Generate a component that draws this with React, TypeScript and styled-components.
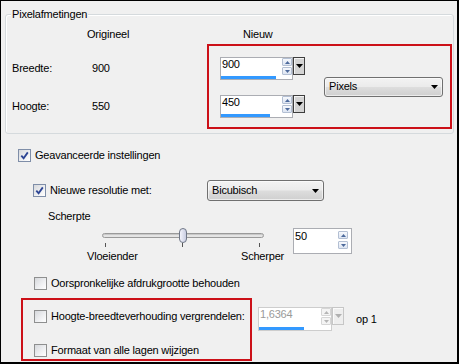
import React from 'react';
import styled, { createGlobalStyle } from 'styled-components';

const RED = '#cc1018';

const GlobalStyle = createGlobalStyle`
  html, body { margin: 0; padding: 0; background: #f0f0f0; }
  * { box-sizing: border-box; }
`;

const Frame = styled.div`
  width: 459px;
  height: 364px;
  background: #f0f0f0;
  border-style: solid;
  border-color: #000;
  border-width: 1px 2px 2px 1px;
  padding: 13px 0 0 4px;
  font-family: 'Liberation Sans', Arial, sans-serif;
  font-size: 11px;
  letter-spacing: -0.2px;
  line-height: 13px;
  color: #000;
  display: flex;
  flex-direction: column;
  overflow: hidden;
`;

/* ---------- group box ---------- */
const GroupBox = styled.div`
  position: relative;
  width: 449px;
  height: 120px;
  border: 1px solid #d5dadd;
  box-shadow: inset 1px 1px 0 #fff;
  border-radius: 3px;
  display: flex;
  flex-direction: column;
`;

const Legend = styled.span`
  position: absolute;
  left: 5px;
  top: -7px;
  padding: 0 1px;
  background: #f0f0f0;
`;

const GroupHeader = styled.div`
  display: grid;
  grid-template-columns: 201px 245px;
  height: 29px;
  padding-top: 13px;
`;

const HeaderCell = styled.span<{ $pl: number }>`
  padding-left: ${(p) => p.$pl}px;
`;

const GroupBody = styled.div`
  display: flex;
`;

const DimCol = styled.div`
  width: 201px;
  padding: 18px 0 0 6px;
  display: flex;
  flex-direction: column;
  gap: 25px;
`;

const DimRow = styled.div`
  display: flex;
  height: 13px;
`;

const DimLabel = styled.span`
  width: 80px;
`;

const RedBox = styled.div<{ $w: number; $h: number; $ml?: number }>`
  width: ${(p) => p.$w}px;
  height: ${(p) => p.$h}px;
  margin-left: ${(p) => p.$ml ?? 0}px;
  border: 2px solid ${RED};
  flex: none;
`;

const UnitBox = styled(RedBox)`
  display: flex;
  align-items: center;
`;

const SpinCol = styled.div`
  align-self: flex-start;
  padding: 11px 0 0 11px;
  display: flex;
  flex-direction: column;
  gap: 15px;
`;

/* ---------- spin field ---------- */
const SpinWrap = styled.div`
  display: flex;
  align-items: flex-start;
`;

const SpinBox = styled.div<{ $w: number; $h: number; $pt?: number; $disabled?: boolean }>`
  position: relative;
  width: ${(p) => p.$w}px;
  height: ${(p) => p.$h}px;
  background: #fff;
  border: 1px solid ${(p) => (p.$disabled ? '#cdcdcd' : '#abadb3')};
  color: ${(p) => (p.$disabled ? '#9a9a9a' : '#000')};
  padding: ${(p) => p.$pt ?? 0}px 0 0 1px;
  line-height: 13px;
`;

const ArrowStack = styled.div<{ $top: number; $right: number; $gap: number }>`
  position: absolute;
  top: ${(p) => p.$top}px;
  right: ${(p) => p.$right}px;
  display: flex;
  flex-direction: column;
  gap: ${(p) => p.$gap}px;
`;

const ArrowBtn = styled.div<{ $disabled?: boolean }>`
  width: 10px;
  height: 8px;
  border: 1px solid ${(p) => (p.$disabled ? '#d6d6d6' : '#b3bfd3')};
  border-radius: 1px;
  background: ${(p) => (p.$disabled ? '#f4f4f4' : 'linear-gradient(#f6f8fc, #dde5f2)')};
  display: flex;
  align-items: center;
  justify-content: center;
`;

const Bar = styled.div`
  position: absolute;
  left: 0;
  bottom: 0;
  height: 3px;
  background: #3399ff;
`;

const DropBtn = styled.div<{ $disabled?: boolean }>`
  width: 12px;
  height: 18px;
  border: 1px solid ${(p) => (p.$disabled ? '#c6c6c6' : '#3e3e3e')};
  background: ${(p) => (p.$disabled ? '#eeeeee' : '#d4d4d4')};
  box-shadow: inset 1px 1px 0 ${(p) => (p.$disabled ? '#fafafa' : '#f4f4f4')};
  display: flex;
  align-items: center;
  justify-content: center;
  flex: none;
`;

const Tri = ({ up, color, w = 5, h = 3 }: { up?: boolean; color: string; w?: number; h?: number }) => (
  <svg width={w} height={h} viewBox={`0 0 ${w} ${h}`}>
    <polygon points={up ? `0,${h} ${w},${h} ${w / 2},0` : `0,0 ${w},0 ${w / 2},${h}`} fill={color} />
  </svg>
);

const Spin = ({
  value,
  w,
  h,
  bar,
  pt,
  arrowsTop,
  arrowsRight,
  arrowsGap,
  drop,
  disabled,
}: {
  value: string;
  w: number;
  h: number;
  bar?: number;
  pt?: number;
  arrowsTop: number;
  arrowsRight: number;
  arrowsGap: number;
  drop?: boolean;
  disabled?: boolean;
}) => {
  const arrowColor = disabled ? '#b5b5b5' : '#4d6a9c';
  return (
    <SpinWrap>
      <SpinBox $w={w} $h={h} $pt={pt} $disabled={disabled}>
        {value}
        <ArrowStack $top={arrowsTop} $right={arrowsRight} $gap={arrowsGap}>
          <ArrowBtn $disabled={disabled}>
            <Tri up color={arrowColor} />
          </ArrowBtn>
          <ArrowBtn $disabled={disabled}>
            <Tri color={arrowColor} />
          </ArrowBtn>
        </ArrowStack>
        {bar ? <Bar style={{ width: bar }} /> : null}
      </SpinBox>
      {drop ? (
        <DropBtn $disabled={disabled}>
          <Tri color={disabled ? '#b0b0b0' : '#000'} w={7} h={4} />
        </DropBtn>
      ) : null}
    </SpinWrap>
  );
};

/* ---------- select ---------- */
const SelectBox = styled.div<{ $w: number; $h: number; $ml?: number }>`
  width: ${(p) => p.$w}px;
  height: ${(p) => p.$h}px;
  margin-left: ${(p) => p.$ml ?? 0}px;
  border: 1px solid #707070;
  border-radius: 3px;
  background: linear-gradient(#f3f3f3 0%, #ebebeb 48%, #dddddd 52%, #cfcfcf 100%);
  box-shadow: inset 0 0 0 1px rgba(255, 255, 255, 0.6);
  display: flex;
  align-items: center;
  justify-content: space-between;
  padding: 0 4px 0 4px;
  flex: none;
`;

const Select = ({ label, w, h, ml }: { label: string; w: number; h: number; ml?: number }) => (
  <SelectBox $w={w} $h={h} $ml={ml}>
    <span>{label}</span>
    <Tri color="#000" w={7} h={4} />
  </SelectBox>
);

/* ---------- checkbox rows ---------- */
const Row = styled.div<{ $mt: number; $ml: number; $h?: number }>`
  display: flex;
  align-items: center;
  margin-top: ${(p) => p.$mt}px;
  margin-left: ${(p) => p.$ml}px;
  height: ${(p) => p.$h ?? 13}px;
  flex: none;
`;

const CheckLabel = styled.label<{ $w?: number }>`
  display: flex;
  align-items: center;
  gap: 4px;
  width: ${(p) => (p.$w ? `${p.$w}px` : 'auto')};
  flex: none;
  white-space: nowrap;
`;

const Box = styled.span<{ $checked?: boolean }>`
  flex: none;
  width: 13px;
  height: 13px;
  border: 1px solid ${(p) => (p.$checked ? '#7f8ea8' : '#8e8f8f')};
  background: linear-gradient(135deg, #d6d8dc 0%, #eeeff1 55%, #ffffff 100%);
  display: inline-flex;
  align-items: center;
  justify-content: center;
`;

const Check = ({ checked, label, w }: { checked?: boolean; label: string; w?: number }) => (
  <CheckLabel $w={w}>
    <Box $checked={checked}>
      {checked ? (
        <svg width="9" height="9" viewBox="0 0 9 9">
          <path d="M1.3 4.6 L3.6 7.2 L7.8 1.4" fill="none" stroke="#2d4594" strokeWidth="1.8" />
        </svg>
      ) : null}
    </Box>
    <span>{label}</span>
  </CheckLabel>
);

const Text = styled.span<{ $mt: number; $ml: number }>`
  display: block;
  margin-top: ${(p) => p.$mt}px;
  margin-left: ${(p) => p.$ml}px;
  height: 13px;
`;

/* ---------- slider ---------- */
const SliderRow = styled.div`
  display: flex;
  align-items: flex-start;
  margin-top: 5px;
`;

const SliderCol = styled.div`
  margin-left: 82px;
  width: 200px;
  flex: none;
  display: flex;
  flex-direction: column;
`;

const SliderArea = styled.div`
  position: relative;
  height: 20px;
  padding-top: 5px;
`;

const Track = styled.div`
  margin-left: 15px;
  width: 162px;
  height: 5px;
  border: 1px solid #9a9a9a;
  border-radius: 3px;
  background: #e4e4e4;
  box-shadow: inset 0 1px 0 #c8c8c8;
`;

const Thumb = styled.div`
  position: absolute;
  left: 92px;
  top: 0;
  width: 8px;
  height: 15px;
  border: 1px solid #6f7787;
  border-radius: 4px;
  background: linear-gradient(to right, #f2f3fb, #c9cde2);
`;

const Ticks = styled.div`
  margin: 5px 0 0 18px;
  width: 155px;
  height: 4px;
  display: flex;
  justify-content: space-between;
`;

const Tick = styled.span`
  width: 1px;
  height: 4px;
  background: #555;
`;

const SliderLabels = styled.div`
  display: grid;
  grid-template-columns: 154px auto;
  justify-items: start;
  margin-top: 2px;
  height: 13px;
`;

const SpinSlot = styled.div`
  margin-left: 6px;
`;

/* ---------- bottom ---------- */
const BottomRow = styled.div`
  display: flex;
  align-items: flex-start;
  margin: 8px 0 0 16px;
`;

const LockBox = styled(RedBox)`
  display: flex;
  flex-direction: column;
  gap: 21px;
  padding: 10px 0 0 11px;
`;

const RatioGroup = styled.div`
  display: flex;
  align-items: center;
  margin: 9px 0 0 6px;
`;

const OpLabel = styled.span`
  margin-left: 12px;
`;

export default function App() {
  return (
    <>
      <GlobalStyle />
      <Frame>
        <GroupBox>
          <Legend>Pixelafmetingen</Legend>
          <GroupHeader>
            <HeaderCell $pl={81}>Origineel</HeaderCell>
            <HeaderCell $pl={36}>Nieuw</HeaderCell>
          </GroupHeader>
          <GroupBody>
            <DimCol>
              <DimRow>
                <DimLabel>Breedte:</DimLabel>
                <span>900</span>
              </DimRow>
              <DimRow>
                <DimLabel>Hoogte:</DimLabel>
                <span>550</span>
              </DimRow>
            </DimCol>
            <UnitBox $w={245} $h={85}>
              <SpinCol>
                <Spin value="900" w={73} h={23} bar={55} arrowsTop={0} arrowsRight={0} arrowsGap={1} drop />
                <Spin value="450" w={73} h={23} bar={49} arrowsTop={0} arrowsRight={0} arrowsGap={1} drop />
              </SpinCol>
              <Select label="Pixels" w={119} h={20} ml={19} />
            </UnitBox>
          </GroupBody>
        </GroupBox>

        <Row $mt={15} $ml={13}>
          <Check checked label="Geavanceerde instellingen" />
        </Row>

        <Row $mt={18} $ml={28} $h={21}>
          <Check checked label="Nieuwe resolutie met:" w={174} />
          <Select label="Bicubisch" w={117} h={21} />
        </Row>

        <Text $mt={9} $ml={43}>Scherpte</Text>

        <SliderRow>
          <SliderCol>
            <SliderArea>
              <Track />
              <Thumb />
              <Ticks>
                <Tick />
                <Tick />
                <Tick />
              </Ticks>
            </SliderArea>
            <SliderLabels>
              <span>Vloeiender</span>
              <span>Scherper</span>
            </SliderLabels>
          </SliderCol>
          <SpinSlot>
            <Spin value="50" w={59} h={26} pt={1} arrowsTop={2} arrowsRight={3} arrowsGap={2} />
          </SpinSlot>
        </SliderRow>

        <Row $mt={14} $ml={29}>
          <Check label="Oorspronkelijke afdrukgrootte behouden" />
        </Row>

        <BottomRow>
          <LockBox $w={231} $h={63}>
            <Check label="Hoogte-breedteverhouding vergrendelen:" />
            <Check label="Formaat van alle lagen wijzigen" />
          </LockBox>
          <RatioGroup>
            <Spin value="1,6364" w={74} h={24} bar={45} arrowsTop={0} arrowsRight={0} arrowsGap={1} drop disabled />
            <OpLabel>op 1</OpLabel>
          </RatioGroup>
        </BottomRow>
      </Frame>
    </>
  );
}
